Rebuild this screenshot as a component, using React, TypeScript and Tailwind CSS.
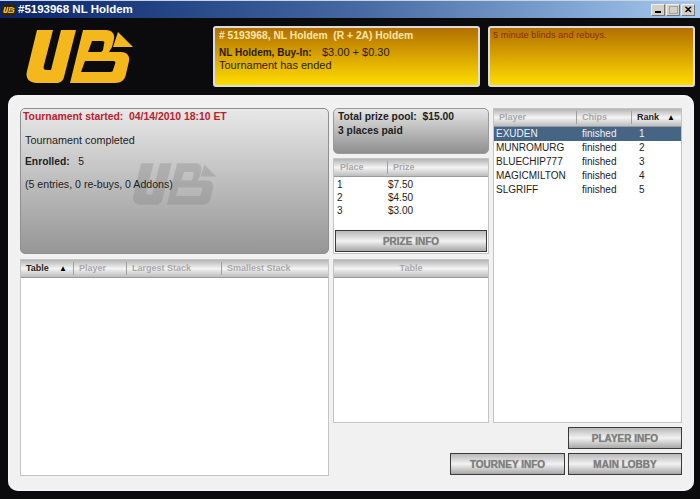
const logoPaths = (
  <>
    <path d="M37 30H53L44 65C43 69 44 70 47 70H51L61 30H76L64 77C63 81 60 83 56 83H37C29 83 25 78 27 71Z" />
    <path fillRule="evenodd" d="M83 30H106C112 30 115 34 114 39L112 47L109 52H121C127 52 130 56 129 61L126 74C125 80 121 83 115 83H70ZM92 41L88 52H100C102 52 102 51 103 50L104 44C105 42 104 41 102 41ZM85 61L81 72H110C112 72 113 71 113 70L115 64C116 62 115 61 113 61Z" />
    <path d="M118 32L133 47H113Z" />
  </>
);

function Logo({ className }: { className: string }) {
  return (
    <svg viewBox="24 28 110 57" className={className} fill="currentColor">
      {logoPaths}
    </svg>
  );
}

function HeaderCell({ label, active, sort, className }: { label: string; active?: boolean; sort?: boolean; className: string }) {
  return (
    <div className={`flex h-[13px] items-center justify-between border-l border-[#a0a0a0] pl-[5px] first:border-l-0 ${sort ? "pr-[6px]" : "pr-1"} ${className}`}>
      <span className={active ? "font-bold text-[#222]" : "font-bold text-[#a9a9a9]"}>{label}</span>
      {sort && <span className="text-[8px] text-black">▲</span>}
    </div>
  );
}

function HeaderBar({ children }: { children: React.ReactNode }) {
  return (
    <div className="flex h-[18px] shrink-0 items-center border-b border-[#9a9a9a] bg-gradient-to-b from-[#b4b4b4] via-[#f4f4f4] to-[#bdbdbd] text-[9px]">
      {children}
    </div>
  );
}

function GameButton({ label, className }: { label: string; className: string }) {
  return (
    <button className={`flex h-[22px] items-center justify-center border border-[#3a3a3a] bg-gradient-to-b from-[#b9b9b9] via-[#f2f2f2] to-[#a8a8a8] text-[10px] font-bold text-[#7f7f7f] [text-shadow:0_0_1px_#8a8a8a] ${className}`}>
      {label}
    </button>
  );
}

function GoldBox({ children, className }: { children: React.ReactNode; className: string }) {
  return (
    <div className={`h-[61px] rounded-[3px] border-2 border-[#dcdcdc] bg-gradient-to-b from-[#b36f00] to-[#ffdd00] ${className}`}>
      {children}
    </div>
  );
}

function WindowButton({ children, className }: { children: React.ReactNode; className: string }) {
  return (
    <div className={`flex h-[12px] w-[14px] justify-center border-t border-l border-[#f4f1ea] border-r-[#777] border-b-[#777] bg-[#d4d0c8] border-r border-b ${className}`}>
      {children}
    </div>
  );
}

const players = [
  ["EXUDEN", "1"],
  ["MUNROMURG", "2"],
  ["BLUECHIP777", "3"],
  ["MAGICMILTON", "4"],
  ["SLGRIFF", "5"],
];

const prizes = [
  ["1", "$7.50"],
  ["2", "$4.50"],
  ["3", "$3.00"],
];

export default function App() {
  return (
    <div className="flex h-[499px] w-[700px] flex-col overflow-hidden bg-[#0b0b0d] font-['Liberation_Sans',Arial,sans-serif]">
      <div className="flex h-[18px] shrink-0 items-center border-t border-[#c9d3e3] bg-gradient-to-r from-[#0a246a] via-[#44689f] to-[#a6caf0] pl-[2px] pr-[5px]">
        <div className="flex h-[12px] w-[14px] items-center justify-center rounded-[2px] bg-[#2a2412] text-[#f5b61a]">
          <Logo className="h-[8px] w-[12px]" />
        </div>
        <span className="ml-[2px] flex-1 text-[11.5px] font-bold text-white">#5193968 NL Holdem</span>
        <div className="flex gap-[1px]">
          <WindowButton className="items-end pb-[2px]">
            <div className="h-[2px] w-[6px] bg-black" />
          </WindowButton>
          <WindowButton className="items-center">
            <div className="h-[8px] w-[9px] border border-[#a5a5a5]" />
          </WindowButton>
          <WindowButton className="items-center text-[10px] font-bold leading-none text-black">✕</WindowButton>
        </div>
      </div>

      <div className="flex h-[77px] shrink-0 items-start pl-[24px] pt-[8px]">
        <Logo className="mt-[2px] h-[57px] w-[110px] text-[#f5b81c]" />
        <GoldBox className="ml-[79px] w-[267px] pl-[4px]">
          <div className="text-[10.3px] font-bold leading-[15px] text-[#fbe7ad]">
            # 5193968, NL Holdem&nbsp; (R + 2A) Holdem
          </div>
          <div className="mt-[3px] flex text-[11px] leading-[13px] text-[#2a1a00]">
            <span className="w-[103px] text-[10px] font-bold">NL Holdem, Buy-In:</span>
            <span>$3.00 + $0.30</span>
          </div>
          <div className="text-[11px] leading-[13px] text-[#2a1a00]">Tournament has ended</div>
        </GoldBox>
        <GoldBox className="ml-[8px] w-[207px] pl-[3px] text-[9.3px] text-[#8a2c00]">
          <div className="leading-[15px]">5 minute blinds and rebuys.</div>
        </GoldBox>
      </div>

      <div className="ml-[8px] flex h-[396px] w-[686px] shrink-0 gap-[4px] rounded-[10px] bg-[#f1f1f1] pl-[12px] pr-[12px] pt-[13px] shadow-[inset_0_0_3px_#fff]">
        <div className="flex w-[309px] shrink-0 flex-col gap-[5px]">
          <div className="relative h-[146px] overflow-hidden rounded-[5px] border border-[#8f8f8f] bg-gradient-to-b from-[#e8e8e8] to-[#969696] pl-[2px] pt-[1px] text-[10.8px] text-[#222]">
            <Logo className="absolute left-[110px] top-[52px] h-[46px] w-[86px] text-[#7d7d7d] opacity-30" />
            <div className="relative text-[10.4px] font-bold leading-[13px] text-[#b8232f]">Tournament started:&nbsp; 04/14/2010 18:10 ET</div>
            <div className="relative ml-[2px] mt-[11px] leading-[12px]">Tournament completed</div>
            <div className="relative ml-[2px] mt-[10px] text-[10.3px] leading-[12px]">
              <span className="font-bold">Enrolled:</span>&nbsp;&nbsp; 5
            </div>
            <div className="relative ml-[2px] mt-[10px] text-[10.6px] leading-[12px]">(5 entries, 0 re-buys, 0 Addons)</div>
          </div>
          <div className="flex h-[217px] flex-col border border-[#c4c4c4] bg-white">
            <HeaderBar>
              <HeaderCell label="Table" active sort className="w-[52px]" />
              <HeaderCell label="Player" className="w-[53px]" />
              <HeaderCell label="Largest Stack" className="w-[95px]" />
              <HeaderCell label="Smallest Stack" className="flex-1" />
            </HeaderBar>
          </div>
        </div>

        <div className="flex flex-1 flex-col">
          <div className="flex gap-[4px]">
            <div className="flex w-[156px] shrink-0 flex-col">
              <div className="h-[46px] rounded-[5px] border border-[#9a9a9a] bg-gradient-to-b from-[#e6e6e6] to-[#8f8f8f] pl-[4px] pt-[1px] text-[10.3px] font-bold leading-[14px] text-[#222]">
                <div>Total prize pool:&nbsp; $15.00</div>
                <div>3 places paid</div>
              </div>
              <div className="mt-[4px] flex h-[96px] flex-col border border-[#c4c4c4] bg-white">
                <HeaderBar>
                  <HeaderCell label="Place" className="w-[53px] pl-[6px]" />
                  <HeaderCell label="Prize" className="flex-1" />
                </HeaderBar>
                <div className="flex flex-1 flex-col pt-[1px] text-[10px] leading-[13px] text-[#222]">
                  {prizes.map(([place, prize]) => (
                    <div key={place} className="flex pl-[3px]">
                      <span className="w-[51px]">{place}</span>
                      <span>{prize}</span>
                    </div>
                  ))}
                </div>
                <div className="px-[1px] pb-[1px]">
                  <GameButton label="PRIZE INFO" className="w-full" />
                </div>
              </div>
              <div className="mt-[5px] flex h-[164px] flex-col border border-[#c4c4c4] bg-white">
                <div className="flex h-[18px] shrink-0 items-center justify-center border-b border-[#9a9a9a] bg-gradient-to-b from-[#b4b4b4] via-[#f4f4f4] to-[#bdbdbd] text-[9px] font-bold text-[#a9a9a9]">
                  Table
                </div>
              </div>
            </div>
            <div className="flex h-[315px] flex-1 flex-col border border-[#c4c4c4] bg-white">
              <HeaderBar>
                <HeaderCell label="Player" className="w-[82px]" />
                <HeaderCell label="Chips" className="w-[55px]" />
                <HeaderCell label="Rank" active sort className="flex-1" />
              </HeaderBar>
              <div className="text-[10px] leading-[14px] text-[#222]">
                {players.map(([name, rank], i) => (
                  <div key={name} className={`flex pl-[2px] ${i === 0 ? "bg-[#466584] text-[#eef2f6]" : ""}`}>
                    <span className="w-[86px]">{name}</span>
                    <span className="w-[57px]">finished</span>
                    <span>{rank}</span>
                  </div>
                ))}
              </div>
            </div>
          </div>
          <div className="mt-[4px] flex flex-col items-end gap-[4px]">
            <GameButton label="PLAYER INFO" className="w-[114px]" />
            <div className="flex gap-[3px]">
              <GameButton label="TOURNEY INFO" className="w-[115px]" />
              <GameButton label="MAIN LOBBY" className="w-[114px]" />
            </div>
          </div>
        </div>
      </div>
    </div>
  );
}
